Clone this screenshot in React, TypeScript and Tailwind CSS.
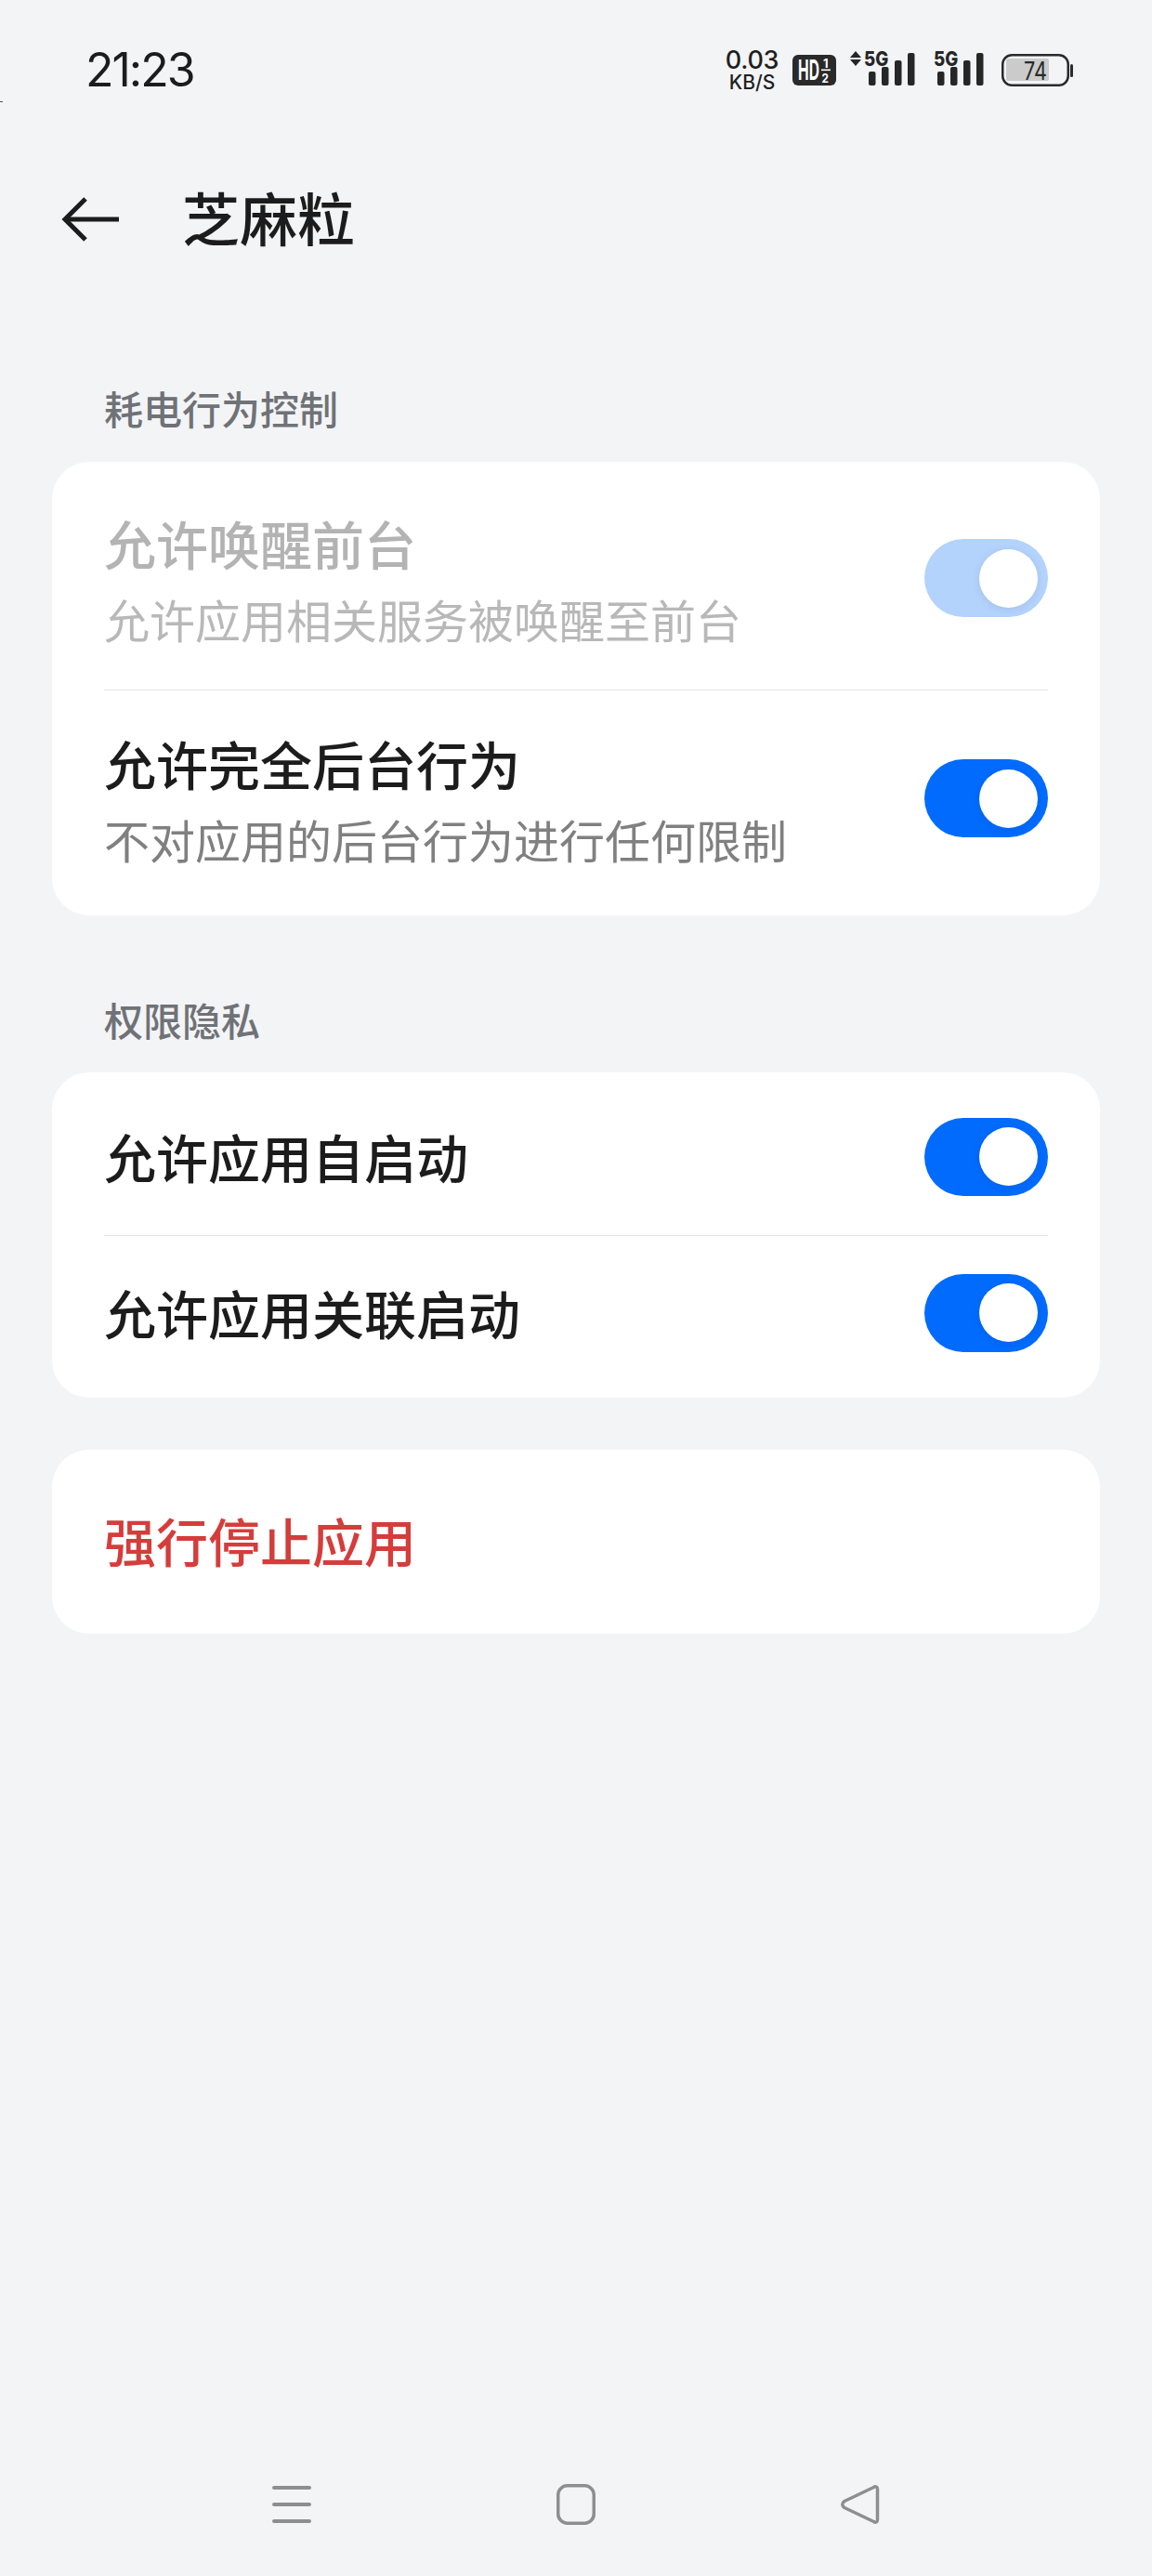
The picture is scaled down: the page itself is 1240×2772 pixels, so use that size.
function Toggle({ dim }: { dim?: boolean }) {
  return (
    <div
      className={`flex h-[84px] w-[133px] shrink-0 items-center justify-end rounded-full pr-[11px] ${
        dim ? "bg-[#b3d2fc]" : "bg-[#006bfd]"
      }`}
    >
      <div className="h-[63px] w-[63px] rounded-full bg-white shadow-[0_2px_10px_rgba(0,0,0,0.08)]" />
    </div>
  );
}

function Divider() {
  return <div className="mx-[56px] h-px bg-[#e4e4e4]" />;
}

function Signal({ arrows }: { arrows?: boolean }) {
  // bars sit under the 5G label, the first icon also has the up/down arrows
  const dx = arrows ? 20 : 4;
  const tops = [22, 17, 10, 2];
  return (
    <svg className="overflow-visible" width={dx + 49} height="38" viewBox={`0 0 ${dx + 49} 38`} fill="#262626">
      {arrows && (
        <>
          <path d="M6 0 L12 7 H0 Z" />
          <path d="M6 16 L12 9 H0 Z" />
        </>
      )}
      <text
        transform={`translate(${arrows ? 15 : 0} 16) scale(0.85 1)`}
        fontSize="22"
        fontWeight="800"
        fontFamily="Inter, sans-serif"
      >
        5G
      </text>
      {tops.map((t, i) => (
        <rect key={i} x={dx + i * 14} y={t} width="7.5" height={37 - t} rx="2" />
      ))}
    </svg>
  );
}

function HdBadge() {
  return (
    <svg className="overflow-visible" width="47" height="33" viewBox="0 0 47 33">
      <rect width="47" height="33" rx="6" fill="#2a2a2a" />
      <g fill="#fff" fontFamily="Inter, sans-serif" fontWeight="700">
        <text transform="translate(6 27) scale(0.52 1)" fontSize="30">
          HD
        </text>
        <text transform="translate(33 14)" fontSize="13">
          1
        </text>
        <text transform="translate(31.5 30) scale(0.9 1)" fontSize="13">
          2
        </text>
      </g>
      <rect x="31" y="15.5" width="10" height="1.6" fill="#fff" />
    </svg>
  );
}

function Battery() {
  return (
    <svg width="77" height="35" viewBox="0 0 77 35">
      <rect x="1.25" y="1.25" width="70.5" height="32.5" rx="10" fill="none" stroke="#2a2a2a" strokeWidth="2.5" />
      <rect x="5" y="5" width="46" height="24" rx="2" fill="#cbcbcb" />
      <rect x="74" y="11" width="3" height="14" rx="1.5" fill="#2a2a2a" />
      <text transform="translate(24 28) scale(0.8 1)" fontSize="27" fill="#2a2a2a" fontFamily="Inter, sans-serif">
        74
      </text>
    </svg>
  );
}

export default function App() {
  return (
    <div className="relative flex h-[2772px] w-[1240px] flex-col overflow-hidden bg-[#f3f4f6] [font-family:Inter,'Noto_Sans_CJK_SC',sans-serif]">
      {/* stray speck on the left edge of the capture */}
      <div className="absolute left-0 top-[109px] h-px w-[3px] bg-[#555]" />

      {/* Status bar */}
      <div className="flex h-[150px] items-center justify-between pl-[92px] pr-[85px]">
        <span className="text-[50px] leading-none tracking-[-2px] text-[#1c1c1c]">21:23</span>
        <div className="flex items-center gap-[15px]">
          <div className="flex w-[57px] flex-col items-center gap-[2px] text-[#1f1f1f]">
            <span className="text-[27px] font-medium leading-[24px] tracking-[-0.3px]">0.03</span>
            <span className="text-[21px] font-medium leading-[19px]">KB/S</span>
          </div>
          <HdBadge />
          <div className="mb-[2px] flex items-center gap-[21px]">
            <Signal arrows />
            <Signal />
          </div>
          <div className="ml-[5px]">
            <Battery />
          </div>
        </div>
      </div>

      {/* Header */}
      <div className="flex h-[172px] items-center pl-[66px]">
        <svg width="64" height="50" viewBox="0 0 64 50" fill="none" stroke="#1c1c1c" strokeWidth="5" strokeLinejoin="miter">
          <path d="M26 3 L4 25 L26 47" />
          <path d="M4 25 H62" />
        </svg>
        <h1 className="ml-[66px] pt-[4px] text-[62px] font-medium leading-none text-[#1c1c1c]">芝麻粒</h1>
      </div>

      {/* Content */}
      <div className="flex flex-col px-[56px]">
        <p className="mt-[90px] mb-[25px] pl-[56px] text-[42px] leading-[60px] text-[#6f7276] [font-weight:450]">
          耗电行为控制
        </p>
        <div className="h-[488px] rounded-[40px] bg-white">
          <div className="flex items-center justify-between pb-[31px] pl-[56px] pr-[56px] pt-[50px]">
            <div>
              <p className="text-[56px] font-medium leading-[82px] text-[#b3b3b3]">允许唤醒前台</p>
              <p className="text-[49px] leading-[82px] text-[#b8b8b8]">允许应用相关服务被唤醒至前台</p>
            </div>
            <div className="mb-[14px]">
              <Toggle dim />
            </div>
          </div>
          <Divider />
          <div className="flex items-center justify-between pb-[37px] pl-[56px] pr-[56px] pt-[41px]">
            <div>
              <p className="text-[56px] font-medium leading-[82px] text-[#1c1c1c]">允许完全后台行为</p>
              <p className="text-[49px] leading-[82px] text-[#808080]">不对应用的后台行为进行任何限制</p>
            </div>
            <div className="mb-[14px]">
              <Toggle />
            </div>
          </div>
        </div>

        <p className="mt-[85px] mb-[24px] pl-[56px] text-[42px] leading-[60px] text-[#6f7276] [font-weight:450]">权限隐私</p>
        <div className="h-[350px] rounded-[40px] bg-white">
          <div className="flex h-[175px] items-center justify-between px-[56px] pt-[6px]">
            <p className="pt-[6px] text-[56px] font-medium leading-[82px] text-[#1c1c1c]">允许应用自启动</p>
            <Toggle />
          </div>
          <Divider />
          <div className="flex h-[174px] items-center justify-between px-[56px] pb-[9px]">
            <p className="pt-[6px] text-[56px] font-medium leading-[82px] text-[#1c1c1c]">允许应用关联启动</p>
            <Toggle />
          </div>
        </div>

        <div className="mt-[56px] flex h-[198px] items-center rounded-[40px] bg-white px-[56px]">
          <p className="pt-[4px] text-[56px] font-medium leading-[82px] text-[#d43d3b]">强行停止应用</p>
        </div>
      </div>

      {/* Navigation bar */}
      <div className="mt-auto flex h-[154px] items-center gap-[264px] pl-[293px]">
        <svg width="42" height="42" viewBox="0 0 42 42" fill="#8e8e8e">
          <rect y="1" width="42" height="4" rx="2" />
          <rect y="19" width="42" height="4" rx="2" />
          <rect y="37" width="42" height="4" rx="2" />
        </svg>
        <svg width="42" height="44" viewBox="0 0 42 44" fill="none" stroke="#8e8e8e" strokeWidth="3.5">
          <rect x="1.75" y="1.75" width="38.5" height="40.5" rx="10" />
        </svg>
        <svg width="42" height="42" viewBox="0 0 42 42" fill="none" stroke="#8e8e8e" strokeWidth="3.5" strokeLinejoin="round">
          <path d="M39.5 4.5 C39.5 2 37.5 1 35.5 2.5 L4 17.5 C1 19.5 1 22.5 4 24.5 L35.5 39.5 C37.5 41 39.5 40 39.5 37.5 Z" />
        </svg>
      </div>
    </div>
  );
}
